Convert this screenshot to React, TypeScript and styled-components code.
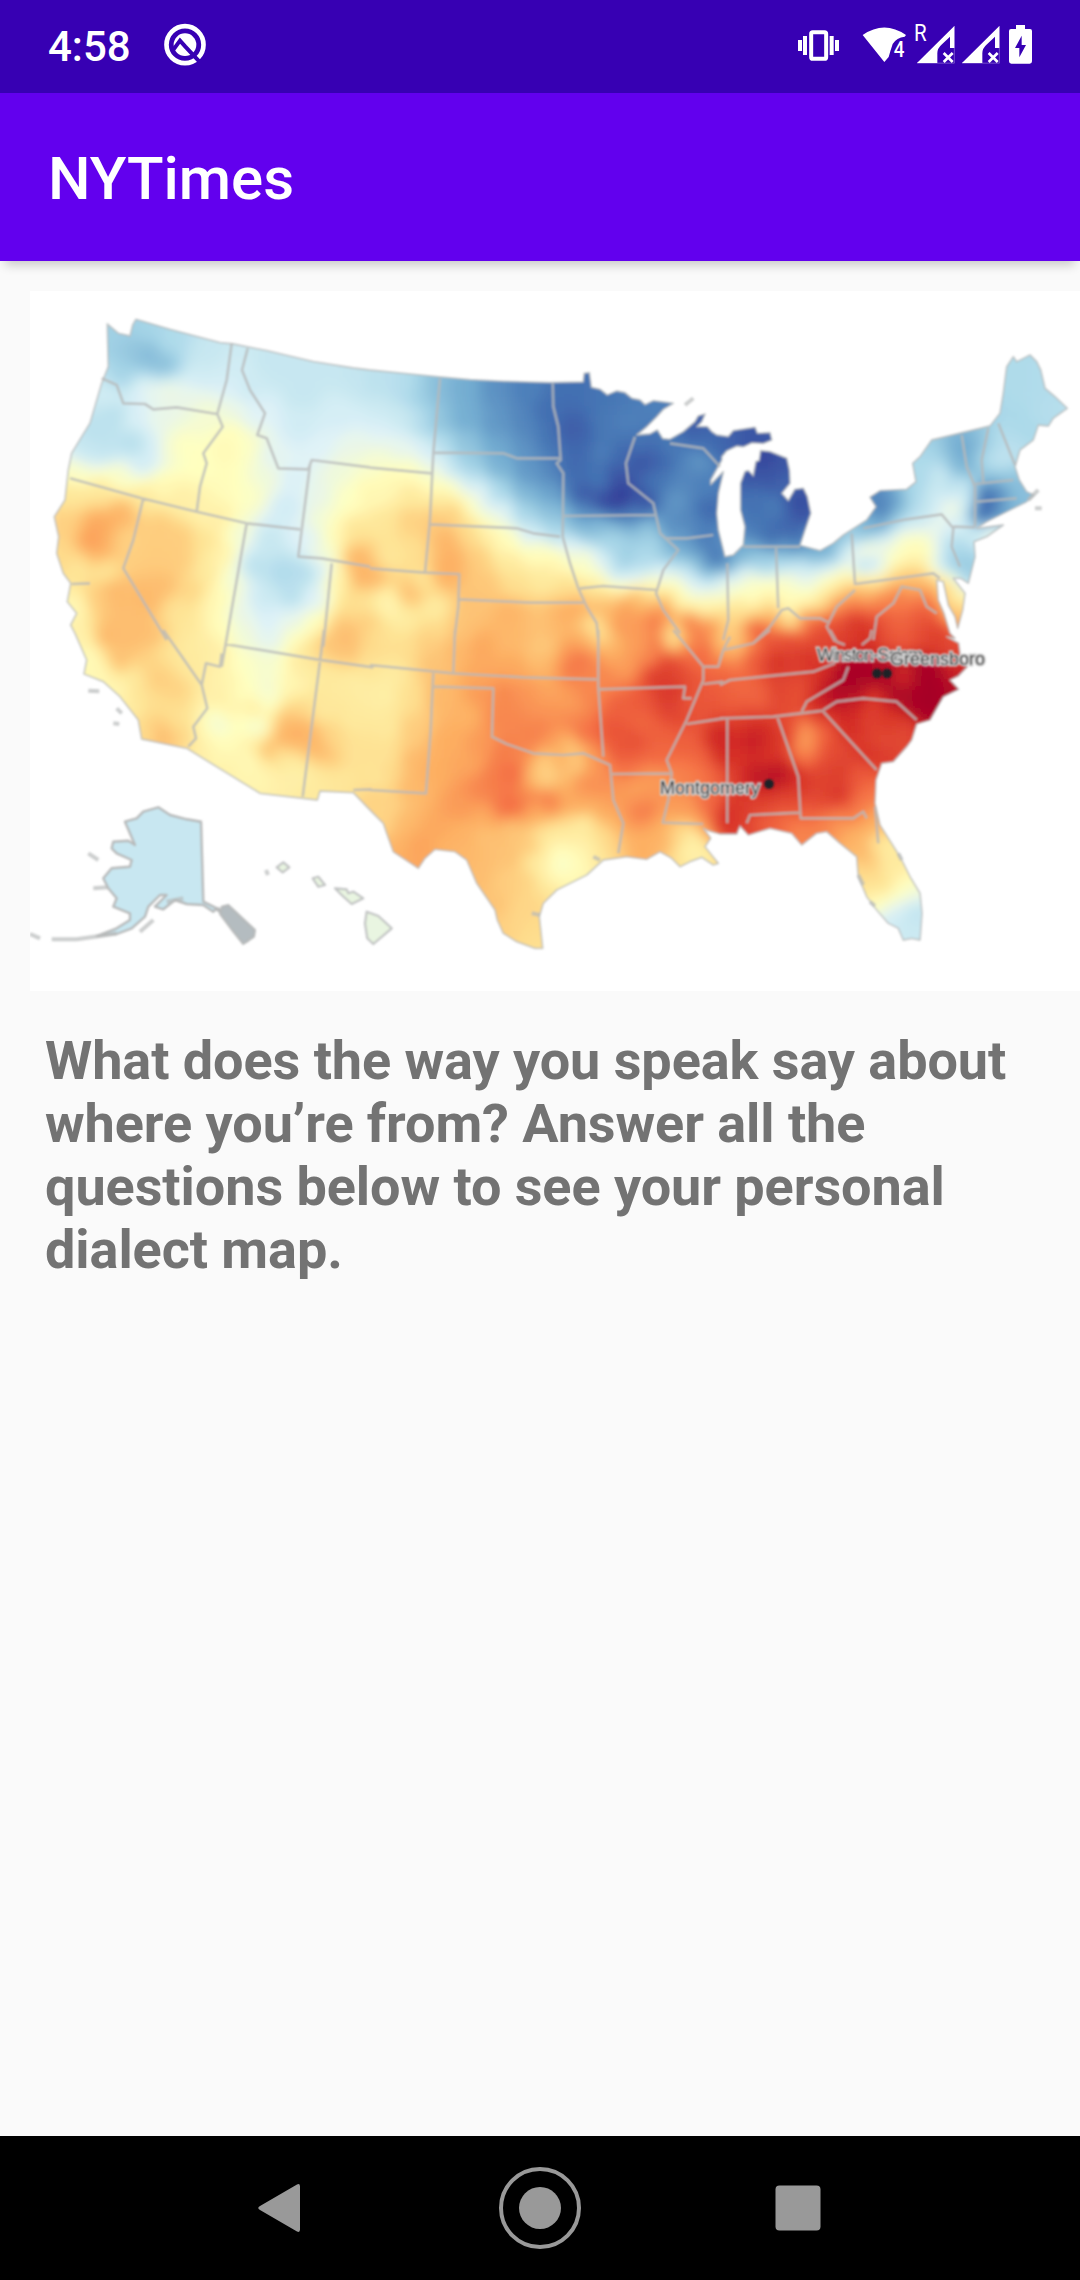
import React from "react";
import styled, { createGlobalStyle } from "styled-components";

const GlobalStyle = createGlobalStyle`
  html, body { margin: 0; padding: 0; background: #fafafa; }
  * { box-sizing: border-box; }
`;

const Screen = styled.div`
  width: 1080px;
  height: 2280px;
  display: flex;
  flex-direction: column;
  overflow: hidden;
  background: #fafafa;
  font-family: Roboto, "Noto Sans", sans-serif;
`;

const StatusBar = styled.header`
  height: 93px;
  flex: none;
  display: flex;
  align-items: flex-start;
  padding: 20px 47px 0 48px;
  background: #3700b3;
  color: #fff;
`;

const Clock = styled.span`
  width: 114px;
  font-size: 42px;
  font-weight: 500;
  line-height: 54px;
`;

const StatusIcon = styled.svg<{ $width: number; $gap?: number }>`
  display: block;
  flex: none;
  width: ${(p) => p.$width}px;
  height: 50px;
  margin-left: ${(p) => p.$gap ?? 0}px;
  font-family: Roboto, sans-serif;
`;

const Spacer = styled.div`
  flex: 1;
`;

const AppBar = styled.div`
  height: 168px;
  flex: none;
  display: flex;
  align-items: center;
  padding: 4px 48px 0;
  background: #6200ee;
  box-shadow: 0 9px 10px -5px rgba(0, 0, 0, 0.2);
`;

const Title = styled.h1`
  margin: 0;
  color: #fff;
  font-size: 60px;
  font-weight: 500;
  line-height: 70px;
`;

const Content = styled.main`
  flex: 1;
  display: flex;
  flex-direction: column;
  padding: 30px 0 0 30px;
`;

const MapFrame = styled.div`
  width: 1050px;
  height: 700px;
  flex: none;
  background: #fff;
  overflow: hidden;
`;

const MapSvg = styled.svg`
  display: block;
  width: 1050px;
  height: 700px;
`;

const Lead = styled.p`
  margin: 0;
  padding: 38px 30px 0 15px;
  color: #737373;
  font-size: 54px;
  font-weight: 700;
  line-height: 63px;
  letter-spacing: -0.065px;
  white-space: nowrap;
`;

const NavBar = styled.nav`
  height: 144px;
  flex: none;
  display: flex;
  align-items: center;
  justify-content: center;
  gap: 168px;
  background: #000;
`;

const NavIcon = styled.svg`
  display: block;
  width: 90px;
  height: 90px;
`;

/* ---------- dialect map data ---------- */

// Each sheet has its own origin and is digitised at three units per pixel.
type Sheet = "A" | "B" | "C" | "D" | "E" | "F";
const ORIGIN: Record<Sheet, [number, number]> = {
  A: [20, 280],
  B: [370, 280],
  C: [720, 280],
  D: [20, 630],
  E: [370, 630],
  F: [720, 630],
};

const project = (sheet: Sheet, points: string) =>
  points
    .trim()
    .split(/\s+/)
    .map((p) => {
      const [x, y] = p.split(",").map(Number);
      const [ox, oy] = ORIGIN[sheet];
      return `${(ox + x / 3).toFixed(1)},${(oy + y / 3).toFixed(1)}`;
    })
    .join(" ");

const line = (sheet: Sheet, points: string) => "M" + project(sheet, points);

const MAINLAND =
  "M" +
  [
    project("A", "262,132 295,160 330,168 338,135 348,118 450,148 600,188 640,192 740,212 880,245 1000,264 1049,270"),
    project("B", "100,280 200,290 300,299 400,304 540,308 640,306 643,280 658,278 664,322 690,328 712,345 740,333 765,338 785,355 810,360 825,374 850,362 910,370 880,388 860,410 830,440 800,465 840,462 862,450 878,476 900,478 940,455 975,425 985,408 1005,402 995,425 980,440 1012,440 1025,455 1040,465 1075,470"),
    project("C", "40,452 105,442 112,460 150,458 155,480 130,490 95,488 70,500 50,498 20,512 5,530"),
    project("B", "1055,540 1022,600 1022,614 1060,575 1045,640 1040,700 1045,750 1060,810"),
    project("C", "15,830 40,825 70,795 75,740 62,690 62,610 75,575 85,572 100,588 108,545 118,542 122,512 150,515 200,535 208,570 210,610 185,640 205,662 225,628 250,625 262,650 272,700 255,750 240,796 300,812 340,790 370,765 440,720 468,680 450,652 480,632 560,628 588,605 578,550 600,530 635,480 710,462 810,438 840,400 850,340 860,260 880,230 890,245 930,225 950,245 962,270 975,325 1005,350 1042,385 1000,415 985,438 955,435 940,480 900,510 885,560 898,600 920,635 942,645 920,665 870,690 800,725 770,745 850,735 800,770 762,785 765,830 745,910 722,895 700,895 735,940 728,990 713,1045 705,1010 685,975 670,905 650,900 655,960 672,1000 690,1060 705,1075"),
    project("F", "680,20 716,40 722,90 742,110 715,138 690,150 716,178 670,200 630,270 590,282 575,330 560,350 520,395 485,400 468,450 465,520 480,585 540,680 570,740 600,790 606,850 600,930 575,925 550,930 535,895 505,880 470,840 440,800 415,740 410,680 360,640 320,605 290,610 245,645 215,610 150,595 85,615 60,588 50,612 0,612"),
    project("E", "1015,602 1000,595 1022,625 1005,650 1045,700 1030,705 995,682 960,695 930,710 905,685 870,665 830,688 770,680 700,690 650,735 560,780 520,820 508,860 518,955 495,955 440,935 400,910 382,870 375,840 320,760 290,690 255,665 195,658 165,685 145,715 70,665 50,610 40,580 0,540"),
    project("D", "1000,488 900,483 892,510 720,490 500,355 365,327 355,270 300,200 250,155 192,132 200,90 165,10"),
    project("A", "152,1035 170,1000 142,965 152,910 130,880 110,820 116,770 103,710 135,660 145,570 155,520 185,470 210,430 245,310 265,260"),
  ].join(" ") +
  "Z";

const BORDERS = [
  line("A", "245,295 290,315 310,370 375,372 400,388 470,382 590,402"),
  line("A", "635,190 620,300 592,402 608,440 550,520 560,550 540,620 530,695"),
  line("A", "683,205 666,270 690,330 735,400 712,465 740,475 775,565 865,568 875,540 1050,562"),
  line("A", "870,555 835,830 905,835 1050,860"),
  line("A", "150,595 365,655 530,695 680,730 840,748"),
  line("A", "370,655 340,780 310,865 440,1080"),
  line("A", "680,730 640,960 605,1160"),
  line("A", "935,850 910,1100"),
  line("A", "155,912 210,910"),
  line("B", "0,563 185,580"),
  line("B", "210,295 190,520 180,720 165,878"),
  line("B", "190,518 400,520 440,535 575,535"),
  line("B", "548,310 550,380 565,440 572,540 560,550 580,580 578,770 600,850 625,925 650,980 680,1030 685,1080"),
  line("B", "180,733 440,745 490,760 570,770"),
  line("B", "0,865 165,878 268,882 265,980 253,1080"),
  line("B", "268,958 480,968 640,968"),
  line("B", "580,708 855,705"),
  line("B", "795,470 768,550 775,610 850,670 870,760 925,810 880,870 858,940 880,990 930,1060"),
  line("B", "630,925 700,918 860,930"),
  line("B", "885,775 950,775 1030,765"),
  line("B", "900,490 1000,505 1050,560"),
  line("C", "70,800 240,800"),
  line("C", "168,800 175,985"),
  line("C", "22,850 25,1020 10,1080"),
  line("C", "100,1090 150,1040 185,990 205,985 240,1015 300,1015 330,1030"),
  line("C", "395,760 405,912 640,880 660,895"),
  line("C", "405,930 350,980 320,1040 345,1085"),
  line("C", "460,1080 470,1010 520,970 545,920 600,930 620,980 650,1000"),
  line("C", "430,745 560,718 665,703 700,745 695,800 720,860"),
  line("C", "700,740 765,742"),
  line("C", "725,465 740,560 765,620 765,740"),
  line("C", "805,445 785,540 790,610"),
  line("C", "835,430 885,555"),
  line("C", "765,612 880,600"),
  line("C", "770,665 890,655"),
  line("D", "430,0 545,165 562,235 520,290 528,325 505,350"),
  line("D", "605,70 600,110 558,100 545,165"),
  line("D", "615,42 890,88 1060,112"),
  line("D", "912,0 880,250 848,500"),
  line("D", "1000,480 1055,478"),
  line("E", "0,105 250,130 460,142 680,148"),
  line("E", "255,0 250,130"),
  line("E", "190,130 182,300 168,490 0,480"),
  line("E", "190,170 370,175 366,320 410,342 490,370 580,375 640,370 720,405 730,510 760,580 745,670"),
  line("E", "685,0 685,170 700,380"),
  line("E", "685,178 945,170 940,205 965,205"),
  line("E", "725,432 905,430"),
  line("E", "910,0 1000,110 1000,150 950,270 890,390 905,430 895,510 878,578 1000,582"),
  line("E", "1000,110 1045,110 1060,60 1080,20"),
  line("E", "1000,162 1060,155"),
  line("E", "950,282 1060,265"),
  line("F", "0,165 30,150 280,125 345,100"),
  line("F", "385,110 370,150 260,215 245,245"),
  line("F", "0,265 160,260 310,242"),
  line("F", "170,255 235,440 242,565 400,565 430,545 440,565"),
  line("F", "22,265 22,580"),
  line("F", "80,580 90,555 240,548"),
  line("F", "310,245 470,420"),
  line("F", "310,240 350,215 430,205 530,215 590,270"),
  line("F", "330,0 350,35 375,45"),
  line("F", "455,0 450,25 425,45"),
  line("F", "0,90 10,60 100,40 150,0"),
  line("F", "465,530 475,640"),
].join(" ");

// x,y,value triples; 0 is least similar (deep blue), 10 most similar (deep red).
const SAMPLES: Record<Sheet, string> = {
  A: `290,170,2.8 380,150,2.9 380,225,2.3 430,260,2.4 330,210,2.6 300,300,2.8 450,180,3.1 560,220,3.5 540,290,3.7 630,270,3.7
  440,330,4.4 380,340,4.2 520,350,4.3 280,340,3.8 340,350,3.8 250,340,3.7 290,400,3.2 340,410,3.9 230,450,3.3 340,490,3.2
  260,500,3.4 370,550,3.7 200,510,3.5 400,500,3.7 420,420,4.3 440,500,4.7 480,500,5 560,400,4.7 640,460,5.1 620,510,5.2
  540,550,5 620,620,5.1 680,500,4.9 690,640,4.9 640,390,4.4 700,410,4 680,330,3.6 640,330,3.9 760,250,3.5 850,330,3.5
  840,440,3.7 960,400,3.8 1000,300,3.5 1070,300,3.3 1060,430,3.9 1020,500,4.3 900,510,4 760,520,4.1 740,600,4.5 820,600,3.9
  800,680,3.7 900,640,4.3 960,570,4.5 1050,560,4.8 980,650,4.9 1050,640,5.3 870,770,3.9 900,740,4.6 940,760,5.2 1000,760,5.9
  170,580,4.8 300,590,4.8 420,620,5.2 160,640,5.8 250,640,5.8 380,650,5.7 480,660,5.5 600,720,5.5 560,690,5.4 240,730,7.1
  210,780,7.3 300,700,6.9 140,740,6.3 130,820,6.1 230,820,7 330,780,6.3 420,740,6.4 400,820,6.4 480,840,6.4 480,780,6.4
  560,790,5.9 600,820,5.4 560,880,5.7 180,860,5.8 250,870,5.8 170,980,5.2 230,960,6.4 280,940,6.8 300,1000,6.7 380,960,6.8
  360,1050,6.7 430,920,6.7 470,990,5.9 500,1040,5.8 520,930,6.2 590,960,5.2 600,1040,5.1 640,900,4.6 660,760,4.6 740,780,3.5
  700,860,3.3 790,880,3.1 860,880,3.1 820,950,3.2 730,960,3.6 740,1030,3.9 660,1000,4.3 820,1030,4.2 880,960,4 890,1030,5
  910,820,4.6 900,880,3.7 940,900,5.4 960,1050,6.6 1010,830,6.9 1030,890,7 1050,960,5.9 1000,970,6 1050,1030,6.5`,
  B: `20,320,3.4 20,400,3.6 20,480,4.1 20,530,4.7 100,320,3.2 100,420,3.6 100,500,4.2 150,340,2.8 150,430,3.2 170,510,3.9
  200,330,2.3 200,430,2.5 210,500,3.2 280,330,2 280,420,2 280,500,2.5 380,330,1.5 380,430,1.6 380,500,1.9 460,330,1.2
  460,430,1.3 470,500,1.5 530,400,.9 530,480,1 600,340,.9 600,450,.6 640,460,.7 700,360,1 760,370,1.1 850,370,1.2
  700,440,1.1 780,420,1.2 690,520,1.2 640,520,.8 600,560,.8 620,600,.9 690,600,1.1 740,590,.4 640,640,.5 750,650,0
  700,670,.2 820,670,.3 760,540,.8 820,540,.4 860,540,.7 860,600,1 820,500,1 900,500,1.1 990,540,1.6 940,600,1.3
  920,660,1.6 1000,620,1.2 1010,690,.8 960,720,1.3 900,740,1.4 980,450,.6 1040,490,.8 1070,480,.8 1000,480,.9
  240,570,3.3 200,560,4.3 300,560,2.7 380,560,2.1 470,580,1.6 540,580,1.3 300,610,3.6 380,640,2.9 460,640,2.2 540,640,1.8
  540,700,2.4 460,700,2.9 560,750,3 480,760,3.7 400,690,3.9 340,650,4.1 380,720,4.6 300,660,4.9 240,620,5 200,600,5.1
  120,570,5 60,600,5.2 20,640,5.2 120,640,5.7 220,660,5.7 40,720,5.8 120,720,6.3 200,720,6.5 250,690,6.4 230,780,6.9
  250,840,7 220,880,7 300,760,6.1 320,830,6.4 360,760,5.5 420,780,5.1 420,850,5.7 500,820,5.1 520,890,5.7 560,840,5.3
  440,910,6 350,910,6.5 310,980,6.6 130,820,6 60,830,5.8 10,900,6.8 120,940,6.7 40,960,5.2 60,990,5.3 160,900,5.8
  190,990,5.6 100,1020,5.6 20,1040,6 200,1050,6.1 280,1050,6.6 420,1000,6.9 440,1060,6.8 500,1040,6.6 590,1000,7 630,980,7.1
  570,1060,6.8 590,920,6 620,820,4.6 600,790,3.9 650,850,5 680,890,5.3 690,850,3.8 640,760,2.4 620,730,2 680,730,2.3
  650,700,1.2 800,700,1.2 720,790,2.9 770,840,2.6 740,880,3 850,790,3 820,850,3 800,880,3.7 830,750,2.6 920,780,1.7
  900,820,2.3 960,830,1.7 1000,780,1.1 1040,840,.7 1020,870,1.6 950,860,3.6 880,880,3.9 1040,900,3.6 980,920,4 1060,950,4.3
  900,910,5 930,960,5 1000,980,5.2 840,920,5.4 740,915,4.8 720,940,6 660,940,6 800,950,6.8 700,980,6.9 760,980,7.4
  800,1040,7.3 740,1040,7.4 670,1040,5.7 860,1030,8 890,960,6.8 880,1000,7.5 910,1050,6.2 960,1030,8 1030,1040,7.7
  990,1070,7.8 1070,1020,6.1 1050,980,5.5`,
  C: `40,480,.6 90,460,.5 140,465,.6 130,530,.2 190,560,.5 150,600,.5 90,600,.5 200,620,.8 100,650,1 160,680,1.2
  230,660,.3 250,700,.4 200,740,.7 100,740,1.1 150,780,.7 230,780,.8 120,700,.9 20,860,1.2 60,830,2 130,830,2.5
  200,810,1.7 270,820,1.9 320,820,1.5 360,780,1.8 350,830,2.5 140,860,3 60,880,4 190,850,3.2 250,860,3.7 330,860,3.8
  380,800,3.6 400,760,2.8 20,910,4.8 90,910,5 100,950,4.8 60,980,5.8 20,990,6.2 150,920,5.2 130,980,6 200,900,4.9
  200,980,4.9 210,1030,5.2 265,915,4.3 260,960,5.2 330,900,5.1 310,960,5.8 370,870,5.1 390,820,4.8 370,920,6.2 350,980,7.6
  260,1020,7.9 160,1010,7.2 110,1050,8.6 200,1065,8.7 300,1060,8.6 340,1030,8.5 400,960,7.7 400,1020,9 450,1060,9.1
  480,960,7.6 480,1020,8.4 540,940,7.9 540,1030,8.1 590,1060,8.5 620,1000,8.6 650,1060,8.8 610,960,8.1 580,920,6.9
  640,920,6.8 630,970,7.6 690,920,6.2 710,950,5.4 710,990,6.5 600,890,6.7 530,890,6.3 450,900,5.6 430,920,6.7 440,805,5.1
  430,865,2.7 470,850,3.4 480,800,4.4 510,840,5 560,780,5.1 600,800,5.2 600,850,5.6 640,820,5 650,740,4.3 660,860,4.3
  470,650,1.3 530,660,1.6 490,690,1 470,740,1.9 540,710,2.5 430,760,1.9 570,650,3 560,740,4 600,600,3 620,560,3.1
  600,700,3.4 640,520,2.9 660,580,3.8 650,640,3.7 690,620,3.3 700,680,4.7 720,740,4 740,660,3.9 735,620,3.8 690,490,2
  660,490,2.8 730,510,1.8 710,560,2.1 760,490,2 750,560,2.1 790,480,2.7 800,540,3.3 850,540,3.6 840,480,3.2 780,590,2.6
  860,590,2.7 880,610,2.4 790,640,.5 840,640,1.1 880,650,2.3 900,650,2.5 790,690,.2 830,690,1.2 870,690,2.2 790,720,.8
  810,755,5 760,770,4 740,780,3.2 730,820,2.8 700,850,2.4 740,860,2.5 740,900,2.8 690,800,3 670,840,2.9
  900,260,3.1 940,330,3.1 880,420,3 980,390,3.2 920,450,3 880,500,3.3`,
  D: `180,20,5.4 210,80,5.1 240,130,5.2 300,180,5.2 260,20,6.8 340,30,6.7 400,30,6.7 300,90,6.7 380,90,6.3 430,60,5.9
  490,60,5.7 340,140,5.7 410,150,6.4 460,180,6.3 350,190,5.9 380,230,6 450,230,6 340,230,5.5 480,280,5.9 400,290,6.4
  430,315,6.8 490,320,6.3 370,310,6 540,30,5.6 520,100,5.7 550,60,5.6 590,80,5.5 620,150,5.4 600,200,5.5 670,110,4.9
  670,190,5 740,110,4.7 740,180,4.6 740,210,4.7 750,20,4.1 680,10,4.5 830,20,5 870,60,6 850,100,5.6 820,170,5.3
  700,235,5.8 640,240,5.4 590,285,4.4 710,295,4.4 670,270,4.9 560,300,5.2 540,350,5.5 620,350,5.1 620,400,5.4 700,390,5.1
  700,330,5.4 730,440,5.3 740,360,7 790,330,7 830,310,7.1 810,270,6.8 860,300,6.9 830,240,6.1 780,370,5.8 820,410,5.5
  800,460,5.5 850,440,5.5 880,330,6.8 900,360,7 920,380,6.5 930,330,6.1 900,430,5.7 880,490,5.7 900,250,5.7 930,160,5.7
  1000,160,5.6 1060,200,5.6 1000,260,5.7 1000,350,5.9 1040,420,5.9 960,450,5.8 920,40,6.6 980,20,6.8 990,60,6.6
  1060,40,6.2 1050,90,5.9 1070,500,6.3`,
  E: `30,30,5.9 100,50,6 180,40,6.4 200,100,6.6 60,140,5.6 50,200,5.5 60,290,5.7 50,380,5.9 20,450,5.8 60,430,6.1
  110,200,6 120,300,6.4 130,400,6.8 120,470,6.8 60,540,6.2 40,580,6.2 100,570,6.8 90,640,6.9 150,650,7.2 140,690,7.1
  200,600,7.1 190,420,7 230,340,7 220,200,6.8 290,250,6.9 290,400,7.1 270,530,7.3 330,480,7.6 340,350,7.3 330,200,7.3
  260,60,6.8 330,50,7.1 330,130,7.1 420,40,6.8 430,110,7.1 500,60,6.5 540,50,6.4 520,110,6.8 590,60,7.4 630,90,8
  600,110,7.8 670,110,7.6 640,30,7 700,15,5.9 720,60,6.9 760,110,7.2 720,150,7.6 800,40,7.2 840,80,7.5 860,40,7.9
  910,25,5.4 890,100,8.8 860,135,8.9 930,120,8.7 960,90,8 970,30,7.6 960,150,8.4 1010,60,8.3 1050,40,6.6 1070,10,6.2
  1060,120,8.2 400,200,7.6 430,280,7.6 400,260,7.6 480,200,7.4 530,190,7.1 530,240,7.4 600,220,7.2 600,270,7.6 650,200,7.6
  640,310,8 560,330,7.2 600,350,6.4 480,330,7.7 520,300,7.7 400,370,7.8 430,430,8.1 380,460,7.8 430,530,8.1 400,540,8
  480,500,7.6 460,380,7.6 520,400,6.3 530,440,6 500,440,6.6 580,395,7.1 620,400,6.1 580,430,6.6 540,510,7.9 580,490,7
  640,460,7.5 660,400,7.4 700,460,7.5 630,530,7.1 700,540,7.1 500,550,7 350,560,7 420,590,6.5 350,620,6.6 280,620,6.9
  230,650,6.9 280,680,6.8 420,680,6.6 340,740,6.7 400,760,6.4 460,750,6.3 380,830,6.6 440,850,6.2 400,890,6.3 480,900,6.1
  500,940,6 500,820,6.2 480,640,6.5 520,620,5.7 500,700,5.6 580,620,5.7 640,580,5.5 700,620,6 570,660,5 580,710,4.5
  560,740,5.2 620,690,5.1 650,660,5.4 600,740,5.3 540,780,5.8 690,670,5.8 740,570,6.9 740,500,7.3 730,640,6.3
  750,220,8.2 720,300,8.4 790,330,8.5 760,360,8.4 820,280,8.1 820,210,8.3 880,190,8.9 920,180,9 900,240,8.8 870,300,8.2
  870,370,8.1 770,410,8 930,250,8.6 960,210,8.3 1040,200,8.3 1000,260,8.4 960,330,8.2 990,380,8.1 950,430,7.7 1040,330,9.2
  1060,300,9.3 1060,380,9.2 1000,440,7.8 1040,440,8.2 1030,520,8 940,530,7.3 860,450,7.3 800,470,7.2 780,560,7.6
  820,550,7.8 780,620,7 860,600,7 880,650,6.9 820,670,7 930,620,6.2 970,620,5.2 950,670,5.3 1000,670,5.5 920,690,6
  1000,590,7.4 1060,580,9 1070,540,9.1`,
  F: `30,30,6.3 60,40,6.5 20,80,7.3 100,30,7.6 100,80,8.4 170,100,9.1 150,40,8.6 220,40,8.7 260,90,9 300,60,8.8
  300,20,8.6 370,20,8.8 430,20,9 500,20,8.4 560,30,8.2 630,30,8.7 690,50,8.6 60,180,8.1 120,190,8.1 180,190,8.7
  170,160,8.7 230,190,8.4 250,150,8.6 300,130,9 30,230,8.2 320,170,9.4 300,220,9.3 380,150,10 350,190,9.9 420,120,10
  390,120,9.9 450,150,10 420,190,10 480,140,10 520,180,10 500,120,9.9 550,145,8.6 550,110,9.4 600,150,10 600,110,10 640,130,10
  700,130,9.2 690,180,9.8 640,170,10 640,200,10 600,200,10 600,240,10 560,210,9.9 550,180,9.9 460,195,8.8 450,210,8.6
  400,230,9.2 380,290,9.1 450,260,8.7 520,260,8.9 560,290,8.6 480,330,8.6
  540,340,8.6 450,370,9 500,380,8.8 260,300,7 250,340,6.9 250,380,7.8 300,320,8 290,270,8.8 210,290,8.6 330,350,8.6
  200,330,8.9 60,300,9 100,330,9.4 150,320,9.1 60,380,9 150,380,8.9 40,430,8.8 30,270,8.6 180,430,9.7 140,440,9.6
  100,440,9.4 210,430,9.3 60,540,8.9 120,530,8.7 200,520,8.6 240,460,8.9 300,430,8.7 360,430,8.8 360,500,9 300,510,8.7
  420,440,8.3 450,490,7.9 430,530,7.8 380,550,8 280,550,8.3 200,570,8 130,580,8.2 80,590,8.7 30,590,9 240,610,7.6
  300,580,7.6 360,580,7.3 400,620,6.9 450,590,7 470,560,7 430,670,6.9 450,700,6.7 480,640,5.7 510,660,5.6 430,720,6
  500,700,5.6 540,700,5.7 490,770,6.2 450,770,6 560,760,5.2 530,800,4.9 490,820,5 470,800,5.2 580,790,4.5 570,850,3.3
  530,840,3.9 600,840,3.4 510,860,3.6 550,890,3.6 590,900,3.6`,
};

const RAMP = ["313695", "4575b4", "74add1", "abd9e9", "e0f3f8", "ffffbf", "fee090", "fdae61", "f46d43", "d73027", "a50026"].map(
  (h) => [0, 2, 4].map((i) => parseInt(h.slice(i, i + 2), 16))
);

const rampColor = (v: number) => {
  const i = Math.min(9, Math.max(0, Math.floor(v)));
  const t = Math.min(1, Math.max(0, v - i));
  const c = RAMP[i].map((a, k) => Math.round(a + (RAMP[i + 1][k] - a) * t));
  return `rgb(${c.join(",")})`;
};

const STATIONS = (Object.keys(SAMPLES) as Sheet[]).flatMap((sheet) =>
  SAMPLES[sheet]
    .trim()
    .split(/\s+/)
    .map((s) => {
      const [x, y, v] = s.split(",").map(Number);
      return [ORIGIN[sheet][0] + x / 3, ORIGIN[sheet][1] + y / 3, v];
    })
);

const CELL = 8;
const CELLS = (() => {
  const out: { x: number; y: number; w: number; fill: string }[] = [];
  for (let y = 310; y < 960; y += CELL) {
    let last: { x: number; y: number; w: number; fill: string } | null = null;
    for (let x = 48; x < 1072; x += CELL) {
      let sum = 0;
      let total = 0;
      for (const [sx, sy, v] of STATIONS) {
        const d = (x + CELL / 2 - sx) ** 2 + (y + CELL / 2 - sy) ** 2;
        if (d > 14400) continue;
        const w = 1 / (d + 130) ** 2.4;
        sum += w * v;
        total += w;
      }
      if (!total) {
        last = null;
        continue;
      }
      const fill = rampColor(Math.round((sum / total) * 25) / 25);
      if (last && last.fill === fill) last.w += CELL;
      else {
        last = { x, y, w: CELL, fill };
        out.push(last);
      }
    }
  }
  return out;
})();

const ALASKA =
  line("D", "315,575 350,565 370,545 415,532 450,555 500,568 543,575 550,815 590,835 580,845 550,825 500,822 465,810 430,838 405,830 440,795 420,795 385,830 375,860 335,895 290,912 230,918 290,895 330,870 330,850 280,830 290,805 265,775 250,745 275,715 330,710 335,690 290,670 275,655 280,635 325,632 345,645") + "Z";
const HAWAII = [
  line("D", "770,712 790,697 808,712 788,727") + "Z",
  line("D", "878,745 895,740 915,765 895,770") + "Z",
  line("D", "945,775 980,778 985,790 1000,785 1030,805 995,822 965,795") + "Z",
  line("D", "1040,845 1075,858 1115,895 1060,942 1042,925 1035,880") + "Z",
].join(" ");
const ISLETS = [
  line("D", "205,670 235,690"),
  line("D", "220,775 265,772"),
  line("D", "95,928 170,928 240,918 290,910"),
  line("D", "30,912 60,925"),
  line("D", "360,905 400,870"),
  line("D", "205,182 238,184"),
  line("D", "290,235 305,250"),
  line("D", "280,280 298,282"),
  line("D", "738,720 744,735"),
  line("C", "925,660 955,630"),
  line("C", "945,685 965,685"),
  line("B", "945,375 970,355"),
  line("F", "535,670 545,690"),
  line("F", "415,735 430,765"),
  line("F", "450,815 465,828"),
  line("D", "440,815 490,805"),
  line("E", "670,680 690,690"),
  line("E", "485,850 510,855"),
].join(" ");

const DialectMap = () => (
  <MapSvg viewBox="30 291 1050 700">
    <defs>
      <clipPath id="land">
        <path d={MAINLAND} />
      </clipPath>
      <filter id="field" x="-5%" y="-5%" width="110%" height="110%">
        <feGaussianBlur stdDeviation="6" />
      </filter>
      <filter id="soft" x="-2%" y="-2%" width="104%" height="104%">
        <feGaussianBlur stdDeviation="1.2" />
      </filter>
      <filter id="softText" x="-10%" y="-30%" width="120%" height="160%">
        <feGaussianBlur stdDeviation="1.2" />
      </filter>
    </defs>
    <g filter="url(#soft)">
      <g clipPath="url(#land)">
        <g filter="url(#field)" shapeRendering="crispEdges">
          {CELLS.map((c) => (
            <rect key={`${c.x}-${c.y}`} x={c.x} y={c.y} width={c.w} height={CELL} fill={c.fill} />
          ))}
        </g>
      </g>
      <g fill="none" stroke="#b7b9b9" strokeLinejoin="round">
        <path d={MAINLAND} strokeWidth="1.8" opacity="0.7" />
        <path d={BORDERS} strokeWidth="2.7" opacity="0.78" />
        <path d={ALASKA} fill="#c8e7f1" strokeWidth="2.4" />
        <path d={HAWAII} fill="#e6f4dc" strokeWidth="2.2" opacity="0.85" />
        <path d={ISLETS} strokeWidth="4" opacity="0.7" />
        <path d={line("D", "590,835 625,865 685,935")} strokeWidth="4" />
        <path d={line("D", "605,830 625,825 705,900 702,920 670,942 640,905 600,852") + "Z"} fill="#b4bcc0" strokeWidth="2" />
      </g>
    </g>
    <g
      filter="url(#softText)"
      fill="#222"
      stroke="#d4d4d4"
      strokeWidth="3"
      paintOrder="stroke"
      fontFamily="Liberation Sans, Arial, sans-serif"
      fontSize="18"
    >
      <text x="660" y="794" textLength="100">Montgomery</text>
      <text x="817" y="661" textLength="106">Winston-Salem</text>
      <text x="890" y="665" textLength="95">Greensboro</text>
    </g>
    <g fill="#1c2426" filter="url(#softText)">
      <circle cx="769" cy="784" r="4.8" />
      <circle cx="877" cy="673.5" r="4.8" />
      <circle cx="887" cy="673.5" r="4.8" />
    </g>
  </MapSvg>
);

/* ---------- status bar icons ---------- */

const AndroidQIcon = () => (
  <StatusIcon $width={46} viewBox="486 60 138 150">
    <circle cx="555" cy="134" r="55.5" fill="none" stroke="#fff" strokeWidth="14" />
    <circle cx="555" cy="134" r="34" fill="#fff" />
    <path d="M518 152L540 122L556 140L606 193" fill="none" stroke="#3700b3" strokeWidth="12" />
  </StatusIcon>
);

const VibrateIcon = () => (
  <StatusIcon $width={43} viewBox="51 60 129 150" fill="#fff">
    <rect x="93.500" y="96.500" width="45" height="80" rx="5" fill="none" stroke="#fff" strokeWidth="12" />
    <rect x="54" y="120" width="12" height="33" />
    <rect x="69" y="108" width="12" height="57" />
    <rect x="149" y="108" width="12" height="57" />
    <rect x="165" y="120" width="12" height="33" />
  </StatusIcon>
);

const WifiIcon = () => (
  <StatusIcon $width={45} $gap={22} viewBox="246 60 135 150">
    <path d="M248 105Q313 60 378 105L374 110Q350 112 338 132L331 154L326 171L313 186Z" fill="#fff" />
    <text x="341" y="170" fontSize="64" fontWeight="500" fill="#fff" textLength="32" lengthAdjust="spacingAndGlyphs">
      4
    </text>
  </StatusIcon>
);

const SignalShape = ({ x }: { x: number }) => (
  <g transform={`translate(${x} 0)`}>
    <path d="M0 189L112 78V144H99V110L75 133Q61 145 61 160V189Z" fill="#fff" />
    <path d="M0 189.500H112V78" fill="none" stroke="#fff" strokeOpacity="0.45" strokeWidth="2" />
    <path d="M80 159L107 186M107 159L80 186" stroke="#fff" strokeWidth="8" />
  </g>
);

const RoamingSignalIcon = () => (
  <StatusIcon $width={42} $gap={7} viewBox="402 60 126 150">
    <text x="402" y="124" fontSize="69" fill="#fff" textLength="38" lengthAdjust="spacingAndGlyphs">
      R
    </text>
    <SignalShape x={411} />
  </StatusIcon>
);

const SignalIcon = () => (
  <StatusIcon $width={40} $gap={5} viewBox="543 60 120 150">
    <SignalShape x={546} />
  </StatusIcon>
);

const BatteryIcon = () => (
  <StatusIcon $width={25} $gap={7} viewBox="684 60 75 150">
    <path d="M708 75H735V87H750Q756 87 756 93V184Q756 191 749 191H694Q687 191 687 184V93Q687 87 693 87H708Z" fill="#fff" />
    <path d="M725 107L705 144H718V172L738 135H725Z" fill="#3700b3" />
  </StatusIcon>
);

export default function App() {
  return (
    <Screen>
      <GlobalStyle />
      <StatusBar>
        <Clock>4:58</Clock>
        <AndroidQIcon />
        <Spacer />
        <VibrateIcon />
        <WifiIcon />
        <RoamingSignalIcon />
        <SignalIcon />
        <BatteryIcon />
      </StatusBar>
      <AppBar>
        <Title>NYTimes</Title>
      </AppBar>
      <Content>
        <MapFrame>
          <DialectMap />
        </MapFrame>
        <Lead>
          What does the way you speak say about
          <br />
          where you’re from? Answer all the
          <br />
          questions below to see your personal
          <br />
          dialect map.
        </Lead>
      </Content>
      <NavBar>
        <NavIcon viewBox="0 0 90 90">
          <path d="M23 43L60 21.500Q63 20 63 23.500V66.500Q63 70 60 68.500L23 47Q19.500 45 23 43Z" fill="#999" />
        </NavIcon>
        <NavIcon viewBox="0 0 90 90">
          <circle cx="45" cy="45" r="39" fill="none" stroke="#999" strokeWidth="4" />
          <circle cx="45" cy="45" r="21" fill="#999" />
        </NavIcon>
        <NavIcon viewBox="0 0 90 90">
          <rect x="22.500" y="22.500" width="45" height="45" rx="4" fill="#999" />
        </NavIcon>
      </NavBar>
    </Screen>
  );
}
